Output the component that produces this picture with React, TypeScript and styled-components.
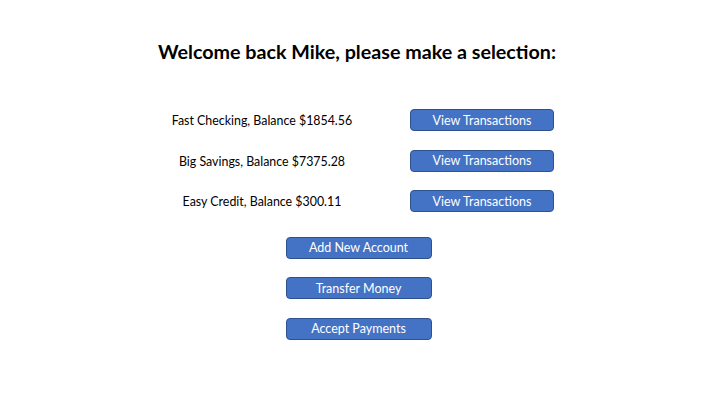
import React from "react";
import styled, { createGlobalStyle } from "styled-components";

const Global = createGlobalStyle`
  html, body { margin: 0; padding: 0; background: #ffffff; }
  body { font-family: Lato, "Open Sans", sans-serif; }
`;

const Page = styled.div`
  width: 720px;
  height: 405px;
  background: #ffffff;
  display: flex;
  flex-direction: column;
  align-items: center;
  box-sizing: border-box;
  padding-top: 38px;
`;

const Title = styled.h1`
  margin: 0;
  font-family: Lato, sans-serif;
  font-weight: 700;
  font-size: 19.7px;
  line-height: 28px;
  color: #000000;
  margin-left: -6px;
`;

const Accounts = styled.div`
  margin-top: 43px;
  display: grid;
  grid-template-columns: 200px 144px;
  column-gap: 48px;
  row-gap: 18.5px;
  align-items: center;
  margin-left: -4px;
`;

const Label = styled.div`
  font-family: Lato, sans-serif;
  font-size: 12.4px;
  color: #000000;
  text-align: center;
  padding-top: 1px;
`;

const Button = styled.button<{ $width: number }>`
  width: ${(p) => p.$width}px;
  height: 22px;
  box-sizing: border-box;
  background: #4472c4;
  border: 1px solid #2f528f;
  border-radius: 4px;
  color: #ffffff;
  font-family: Lato, sans-serif;
  font-size: 12.5px;
  padding: 0;
  display: flex;
  align-items: center;
  justify-content: center;
`;

const Actions = styled.div`
  margin-top: 24.5px;
  display: flex;
  flex-direction: column;
  gap: 18.5px;
  margin-left: -3px;
`;

const accounts = [
  { name: "Fast Checking", balance: "1854.56" },
  { name: "Big Savings", balance: "7375.28" },
  { name: "Easy Credit", balance: "300.11" },
];

export default function App() {
  return (
    <>
      <Global />
      <Page>
        <Title>Welcome back Mike, please make a selection:</Title>
        <Accounts>
          {accounts.map((a) => (
            <React.Fragment key={a.name}>
              <Label>
                {a.name}, Balance ${a.balance}
              </Label>
              <Button $width={144}>View Transactions</Button>
            </React.Fragment>
          ))}
        </Accounts>
        <Actions>
          <Button $width={146}>Add New Account</Button>
          <Button $width={146}>Transfer Money</Button>
          <Button $width={146}>Accept Payments</Button>
        </Actions>
      </Page>
    </>
  );
}
